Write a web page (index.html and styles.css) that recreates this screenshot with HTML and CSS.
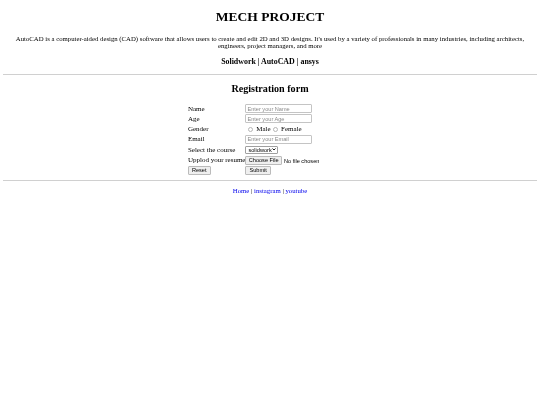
FILE: index.html
```html
<!DOCTYPE html>
<html lang="en">
<head>
<meta charset="UTF-8">
<meta name="viewport" content="width=device-width, initial-scale=1.0">
<title>MECH PROJECT</title>
<link rel="stylesheet" href="styles.css">
</head>
<body>

<div class="intro">
  <h1>MECH PROJECT</h1>
  <p>AutoCAD is a computer-aided design (CAD) software that allows users to create and edit 2D and 3D designs. It's used by a variety of professionals in many industries, including architects, engineers, project managers, and more</p>
  <h3>Solidwork | AutoCAD | ansys</h3>
</div>
<hr>

<h2 class="form-title">Registration form</h2>
<form class="form-wrap">
  <table>
    <tr>
      <td>Name</td>
      <td><input class="field" type="text" placeholder="Enter your Name"></td>
    </tr>
    <tr>
      <td>Age</td>
      <td><input class="field" type="text" placeholder="Enter your Age"></td>
    </tr>
    <tr>
      <td>Gender</td>
      <td class="radios">
        <input type="radio" name="gender" id="male"> <label for="male">Male</label>
        <input type="radio" name="gender" id="female"> <label for="female">Female</label>
      </td>
    </tr>
    <tr>
      <td>Email</td>
      <td><input class="field" type="email" placeholder="Enter your Email"></td>
    </tr>
    <tr>
      <td>Select the course</td>
      <td>
        <select class="course">
          <option>solidwork</option>
          <option>AutoCAD</option>
          <option>ansys</option>
        </select>
      </td>
    </tr>
    <tr>
      <td>Upplod your resume</td>
      <td><input class="resume" type="file"></td>
    </tr>
    <tr>
      <td><input class="btn" type="reset" value="Reset"></td>
      <td><input class="btn" type="submit" value="Submit"></td>
    </tr>
  </table>
</form>
<hr>

<div class="links">
  <a href="#">Home </a>| <a href="#">instagram </a>| <a href="#">youtube</a>
</div>

</body>
</html>
```

FILE: styles.css
```css
body {
  font-family: "Liberation Serif", "Times New Roman", serif;
  font-size: 6.75px;
  color: #000;
  background-color: #fff;
  margin: 3.4px;
  filter: blur(0.35px);
}

.intro {
  text-align: center;
}

h1 {
  font-size: 13.5px;
  margin: 6px 0 9.5px;
}

p {
  margin: 0;
  line-height: 7.5px;
}

h3 {
  font-size: 7.9px;
  margin: 7px 0 8px;
}

hr {
  border: none;
  border-top: 1px solid #d0d0d0;
  margin: 0;
}

.form-title {
  font-size: 10.1px;
  text-align: center;
  margin: 8px 0 9.5px;
}

.form-wrap {
  display: flex;
  margin: 0 0 4.5px 184.5px;
}

table {
  border-collapse: collapse;
  font-size: 7px;
}

td {
  padding: 0;
  height: 10.3px;
  vertical-align: middle;
}

.field,
.course,
.btn,
.resume {
  font-family: "Liberation Sans", Arial, sans-serif;
  font-size: 5.6px;
  display: block;
  box-sizing: border-box;
  margin: 0;
}

.field {
  width: 66.5px;
  height: 9px;
  padding: 0 1px;
  border: 1px solid #c4c4c4;
  border-radius: 1px;
}

.field::placeholder {
  color: #8a8a8a;
}

.radios {
  padding-left: 2px;
}

.radios input {
  appearance: none;
  width: 5px;
  height: 5px;
  margin: 0 1px;
  border: 1px solid #b4b4b4;
  border-radius: 50%;
  vertical-align: -0.5px;
}

.course {
  appearance: none;
  width: 33px;
  height: 8px;
  padding: 0 0 0 2px;
  border: 1px solid #a0a0a0;
  border-radius: 1px;
  background: #fff url("data:image/svg+xml,%3Csvg xmlns='http://www.w3.org/2000/svg' width='4' height='3'%3E%3Cpath d='M.5.5 2 2 3.5.5' fill='none' stroke='%23000' stroke-width='.9'/%3E%3C/svg%3E") no-repeat right 1px center;
}

.resume {
  width: 90px;
  height: 9px;
}

.resume::file-selector-button {
  font: inherit;
  width: 36.5px;
  height: 9px;
  padding: 0;
  margin-right: 2px;
  border: 1px solid #bbb;
  border-radius: 1px;
  background-color: #efefef;
}

.btn {
  height: 9px;
  padding: 0 3px;
  border: 1px solid #bbb;
  border-radius: 1px;
  background-color: #efefef;
}

.links {
  text-align: center;
  margin-top: 6.5px;
}

.links a {
  text-decoration-thickness: 0.7px;
  text-underline-offset: 1px;
}
```
